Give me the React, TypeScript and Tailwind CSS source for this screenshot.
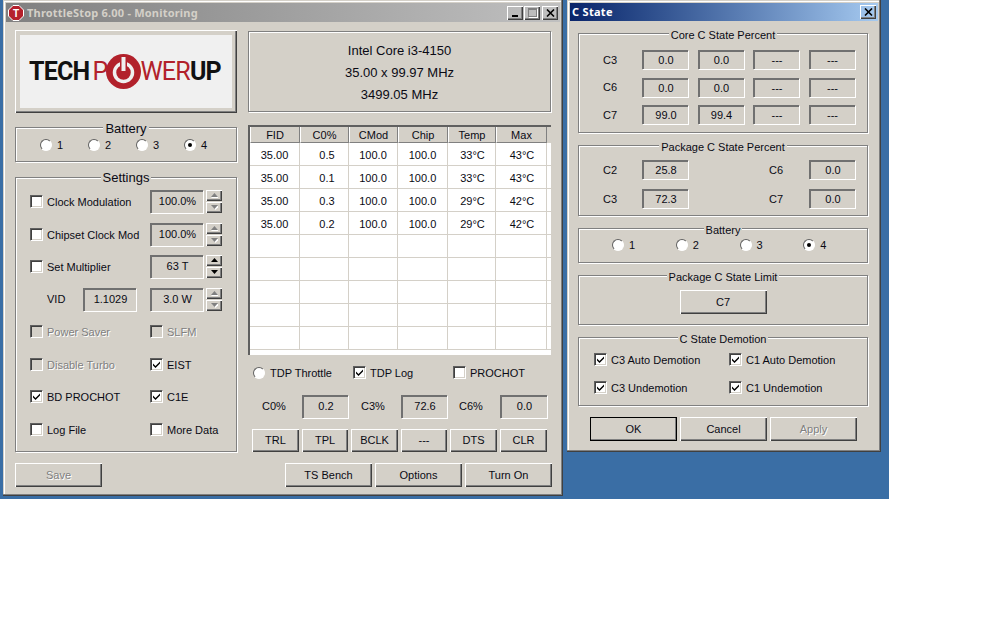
import type { ReactNode } from "react"

const raised =
  "shadow-[inset_1px_1px_0_#fff,inset_-1px_-1px_0_#404040,inset_-2px_-2px_0_#808080]"
const disabledText = "text-[#808080] [text-shadow:1px_1px_0_#fff]"

function Group({ title, className, titleClass = "top-[-6px] text-[11px]", children }: { title: string; className: string; titleClass?: string; children?: ReactNode }) {
  return (
    <div className={`relative border border-[#808080] shadow-[inset_1px_1px_0_#fff,1px_1px_0_#fff] ${className}`}>
      {title && (
        <div className={`absolute left-0 right-0 flex justify-center ${titleClass}`}>
          <span className="bg-[#d4d0c8] px-[2px] leading-[14px]">{title}</span>
        </div>
      )}
      {children}
    </div>
  )
}

function Field({ value, className = "" }: { value: string; className?: string }) {
  return (
    <div
      className={`flex items-center justify-center border-2 border-t-[#707070] border-l-[#707070] border-b-0 border-r-0 shadow-[1px_1px_0_#fff] ${className}`}
    >
      {value}
    </div>
  )
}

function Button({ label, className = "", disabled = false }: { label: string; className?: string; disabled?: boolean }) {
  return (
    <div className={`flex items-center justify-center ${raised} ${disabled ? disabledText : ""} ${className}`}>
      {label}
    </div>
  )
}

function Check({ label, checked = false, disabled = false }: { label: string; checked?: boolean; disabled?: boolean }) {
  return (
    <div className={`flex h-[13px] items-center ${disabled ? disabledText : ""}`}>
      <div
        className={`flex h-[13px] w-[13px] shrink-0 items-center justify-center border border-t-[#606060] border-l-[#606060] border-b-white border-r-white shadow-[inset_1px_1px_0_#404040,inset_-1px_-1px_0_#d4d0c8] ${
          disabled ? "bg-[#d4d0c8]" : "bg-white"
        }`}
      >
        {checked && (
          <svg width="9" height="9" viewBox="0 0 9 9">
            <path d="M1 3.5 L3.5 6 L8 1.5 V3.5 L3.5 8 L1 5.5 Z" fill="#000" />
          </svg>
        )}
      </div>
      <span className="ml-[4px] whitespace-nowrap pt-[2px]">{label}</span>
    </div>
  )
}

function Radio({ label, checked = false, className = "" }: { label: string; checked?: boolean; className?: string }) {
  return (
    <div className={`flex h-[14px] items-center ${className}`}>
      <div className="flex h-[12px] w-[12px] shrink-0 items-center justify-center rounded-full border border-t-[#606060] border-l-[#606060] border-b-white border-r-white bg-white">
        {checked && <div className="h-[4px] w-[4px] rounded-full bg-black" />}
      </div>
      <span className="ml-[5px] whitespace-nowrap">{label}</span>
    </div>
  )
}

function Spin({ up, enabled }: { up: boolean; enabled: boolean }) {
  return (
    <div className={`flex h-[11px] w-[16px] items-center justify-center ${raised}`}>
      <svg width="7" height="5" viewBox="0 0 7 5">
        {!enabled && <polygon points={up ? "4,1 8,5 0,5" : "1,1 8,1 4.5,5"} fill="#fff" />}
        <polygon points={up ? "3.5,0 7,4 0,4" : "0,0 7,0 3.5,4"} fill={enabled ? "#000" : "#808080"} />
      </svg>
    </div>
  )
}

function Spinner({ enabled = false }: { enabled?: boolean }) {
  return (
    <div className="ml-[3px] flex h-[23px] flex-col justify-between">
      <Spin up enabled={enabled} />
      <Spin up={false} enabled={enabled} />
    </div>
  )
}

function TitleButton({ children }: { children: ReactNode }) {
  return <div className={`flex h-[14px] w-[16px] items-center justify-center ${raised}`}>{children}</div>
}

const CloseIcon = (
  <svg width="9" height="8" viewBox="0 0 9 8">
    <path d="M1 0.5 L8 7.5 M8 0.5 L1 7.5" stroke="#000" strokeWidth="1.6" />
  </svg>
)

const rowCols = "grid grid-cols-[50px_49px_49px_50px_48px_51px]"
const headers = ["FID", "C0%", "CMod", "Chip", "Temp", "Max"]
const rows = [
  ["35.00", "0.5", "100.0", "100.0", "33°C", "43°C"],
  ["35.00", "0.1", "100.0", "100.0", "33°C", "43°C"],
  ["35.00", "0.3", "100.0", "100.0", "29°C", "42°C"],
  ["35.00", "0.2", "100.0", "100.0", "29°C", "42°C"],
  ["", "", "", "", "", ""],
  ["", "", "", "", "", ""],
  ["", "", "", "", "", ""],
  ["", "", "", "", "", ""],
  ["", "", "", "", "", ""],
]

const cellPad = ["", "pl-[6px]", "", "", "pl-[2px]", "pl-[2px]"]

function Logo() {
  return (
    <div className="flex h-[83px] items-center justify-center bg-[#d4d0c8] p-[5px] shadow-[inset_1px_1px_0_#fff,inset_-1px_-1px_0_#404040,inset_-2px_-2px_0_#808080]">
      <div className="flex h-full w-full items-center justify-center bg-[#f0f0f0] pr-[2px] font-['Roboto',sans-serif] text-[25px] font-bold leading-none tracking-[-0.8px]">
        <span className="text-[#111]">TECH</span>
        <span className="ml-[3px] font-normal text-[#b2212b]">P</span>
        <svg width="35" height="35" viewBox="0 0 35 35" className="mx-[-1px] shrink-0">
          <circle cx="17.5" cy="17.5" r="17.5" fill="#b2212b" />
          <circle cx="17.5" cy="18.5" r="9" fill="none" stroke="#f0f0f0" strokeWidth="3.5" />
          <rect x="14" y="2" width="7" height="15" fill="#b2212b" />
          <rect x="15.5" y="3" width="4" height="14" fill="#f0f0f0" />
        </svg>
        <span className="font-normal text-[#b2212b]">WER</span>
        <span className="text-[#111]">UP</span>
      </div>
    </div>
  )
}

function MainWindow() {
  return (
    <div className="absolute left-[3px] top-0 h-[496px] w-[560px] bg-[#d4d0c8] p-[3px] shadow-[inset_-1px_-1px_0_#404040,inset_-2px_-2px_0_#808080,inset_1px_1px_0_#d4d0c8,inset_2px_2px_0_#fff]">
      <div className="flex h-[19px] items-center bg-gradient-to-r from-[#808080] to-[#c0c0c0] pl-[2px] pr-[2px]">
        <svg width="16" height="16" viewBox="0 0 16 16" className="shrink-0">
          <polygon points="5,0.5 11,0.5 15.5,5 15.5,11 11,15.5 5,15.5 0.5,11 0.5,5" fill="#b5202b" stroke="#fff" />
          <text x="8" y="11.5" textAnchor="middle" fontSize="10" fontWeight="700" fill="#fff">
            T
          </text>
        </svg>
        <span className="ml-[3px] font-['Noto_Sans',sans-serif] text-[11px] font-bold tracking-[0.2px] text-[#d4d0c8]">
          ThrottleStop 6.00 - Monitoring
        </span>
        <div className="ml-auto flex items-center">
          <TitleButton>
            <div className="mt-[7px] h-[2px] w-[6px] bg-black" />
          </TitleButton>
          <div className="ml-[1px]">
            <TitleButton>
              <div className="h-[9px] w-[9px] border border-t-2 border-[#808080] shadow-[1px_1px_0_#fff]" />
            </TitleButton>
          </div>
          <div className="ml-[2px]">
            <TitleButton>{CloseIcon}</TitleButton>
          </div>
        </div>
      </div>

      <div className="flex gap-[11px] pl-[9px] pt-[8px]">
        <div className="flex w-[222px] flex-col">
          <Logo />
          <Group title="Battery" titleClass="top-[-6px] text-[13px]" className="mt-[14px] h-[35px]">
            <div className="flex pl-[24px] pt-[10px]">
              <Radio label="1" className="w-[48px]" />
              <Radio label="2" className="w-[48px]" />
              <Radio label="3" className="w-[48px]" />
              <Radio label="4" checked className="w-[48px]" />
            </div>
          </Group>
          <Group title="Settings" titleClass="top-[-7px] text-[13px]" className="mt-[15px] h-[275px] pl-[14px] pt-[12px]">
            <div className="flex h-[23px] items-center">
              <div className="w-[120px]"><Check label="Clock Modulation" /></div>
              <Field value="100.0%" className="h-[23px] w-[53px] pb-[3px]" />
              <Spinner />
            </div>
            <div className="mt-[10px] flex h-[23px] items-center">
              <div className="w-[120px]"><Check label="Chipset Clock Mod" /></div>
              <Field value="100.0%" className="h-[23px] w-[53px] pb-[3px]" />
              <Spinner />
            </div>
            <div className="mt-[9px] flex h-[23px] items-center">
              <div className="w-[120px]"><Check label="Set Multiplier" /></div>
              <Field value="63 T" className="h-[23px] w-[53px] pb-[3px]" />
              <Spinner enabled />
            </div>
            <div className="mt-[10px] flex h-[23px] items-center">
              <span className="ml-[17px] w-[36px]">VID</span>
              <Field value="1.1029" className="h-[23px] w-[53px] pb-[3px]" />
              <Field value="3.0 W" className="ml-[14px] h-[23px] w-[53px] pb-[3px]" />
              <Spinner />
            </div>
            <div className="mt-[14px] grid grid-cols-[120px_1fr] gap-y-[19.67px]">
              <Check label="Power Saver" disabled />
              <Check label="SLFM" disabled />
              <Check label="Disable Turbo" disabled />
              <Check label="EIST" checked />
              <Check label="BD PROCHOT" checked />
              <Check label="C1E" checked />
              <Check label="Log File" />
              <Check label="More Data" />
            </div>
          </Group>
          <Button label="Save" disabled className="mt-[11px] h-[24px] w-[87px]" />
        </div>

        <div className="flex w-[304px] flex-col">
          <Group title="" className="mt-[1px] flex h-[81px] w-[303px] flex-col items-center justify-center gap-[6px] pt-[2px] text-[13px] leading-[16px]">
            <span>Intel Core i3-4150</span>
            <span>35.00 x 99.97 MHz</span>
            <span>3499.05 MHz</span>
          </Group>

          <div className="mt-[13px] h-[230px] w-[303px] border-2 border-t-[#606060] border-l-[#606060] border-b-0 border-r-0 bg-white shadow-[1px_1px_0_#fff] outline outline-1 outline-[#d4d0c8]">
            <div className={`${rowCols} h-[16px] bg-[#d4d0c8]`}>
              {headers.map((h) => (
                <div key={h} className="flex items-center justify-center border-l border-l-white border-r border-r-[#808080] border-b border-b-[#808080] pt-[2px]">
                  {h}
                </div>
              ))}
            </div>
            {rows.map((row, i) => (
              <div key={i} className={`${rowCols} h-[23px] border-b border-b-[#d4d0c8]`}>
                {row.map((cell, j) => (
                  <div key={j} className={`flex items-center justify-center border-r border-r-[#d4d0c8] pt-[2px] ${cellPad[j]}`}>
                    {cell}
                  </div>
                ))}
              </div>
            ))}
          </div>

          <div className="mt-[11px] flex h-[14px] w-[303px]">
            <div className="ml-[5px] w-[100px]"><Radio label="TDP Throttle" /></div>
            <div className="w-[100px]"><Check label="TDP Log" checked /></div>
            <Check label="PROCHOT" />
          </div>

          <div className="mt-[15px] grid h-[23px] w-[299px] grid-cols-[54px_46px_53px_46px_53px_47px]">
            <span className="self-center pb-[1px] pl-[14px]">C0%</span>
            <Field value="0.2" className="pb-[3px]" />
            <span className="self-center pb-[1px] pl-[13px]">C3%</span>
            <Field value="72.6" className="pb-[3px]" />
            <span className="self-center pb-[1px] pl-[12px]">C6%</span>
            <Field value="0.0" className="pb-[3px]" />
          </div>

          <div className="ml-[4px] mt-[11px] flex h-[23px] gap-[3px]">
            <Button label="TRL" className="w-[47px]" />
            <Button label="TPL" className="w-[46px]" />
            <Button label="BCLK" className="w-[47px]" />
            <Button label="---" className="w-[46px]" />
            <Button label="DTS" className="w-[47px]" />
            <Button label="CLR" className="w-[47px]" />
          </div>

          <div className="mt-[11px] flex h-[24px] justify-end gap-[3px]">
            <Button label="TS Bench" className="w-[87px]" />
            <Button label="Options" className="w-[87px]" />
            <Button label="Turn On" className="w-[87px]" />
          </div>
        </div>
      </div>
    </div>
  )
}

const coreRows = [
  ["C3", "0.0", "0.0", "---", "---"],
  ["C6", "0.0", "0.0", "---", "---"],
  ["C7", "99.0", "99.4", "---", "---"],
]

function CStateWindow() {
  return (
    <div className="absolute left-[567px] top-0 h-[452px] w-[314px] bg-[#d4d0c8] p-[3px] shadow-[inset_-1px_-1px_0_#404040,inset_-2px_-2px_0_#808080,inset_1px_1px_0_#d4d0c8,inset_2px_2px_0_#fff]">
      <div className="flex h-[18px] items-center bg-gradient-to-r from-[#0a246a] to-[#a6caf0] pb-[1px] pl-[2px] pr-[2px]">
        <span className="font-['Noto_Sans',sans-serif] text-[11px] font-bold tracking-[0.3px] text-white">C State</span>
        <div className="ml-auto">
          <TitleButton>{CloseIcon}</TitleButton>
        </div>
      </div>

      <div className="ml-[8px] flex w-[290px] flex-col">
        <Group title="Core C State Percent" className="mt-[12px] h-[100px] pl-[24px] pt-[16px]">
          <div className="grid grid-cols-[29.5px_46px_46px_46px_46px] gap-x-[9.5px] gap-y-[8.5px]">
            {coreRows.map((row) =>
              row.map((v, i) =>
                i === 0 ? (
                  <span key={row[0]} className="self-center pt-[1px]">{v}</span>
                ) : (
                  <Field key={row[0] + i} value={v} className="h-[19px]" />
                ),
              ),
            )}
          </div>
        </Group>

        <Group title="Package C State Percent" className="mt-[12px] h-[71px] pl-[24px] pt-[14px]">
          <div className="flex h-[19px] items-center">
            <span className="w-[39px] pt-[1px]">C2</span>
            <Field value="25.8" className="h-[19px] w-[46px]" />
            <span className="ml-[81px] w-[40px] pt-[1px]">C6</span>
            <Field value="0.0" className="h-[19px] w-[46px]" />
          </div>
          <div className="mt-[10px] flex h-[19px] items-center">
            <span className="w-[39px] pt-[1px]">C3</span>
            <Field value="72.3" className="h-[19px] w-[46px]" />
            <span className="ml-[81px] w-[40px] pt-[1px]">C7</span>
            <Field value="0.0" className="h-[19px] w-[46px]" />
          </div>
        </Group>

        <Group title="Battery" className="mt-[12px] h-[35px]">
          <div className="flex pl-[33px] pt-[9px]">
            <Radio label="1" className="w-[66px]" />
            <Radio label="2" className="w-[66px]" />
            <Radio label="3" className="w-[66px]" />
            <Radio label="4" checked className="w-[66px]" />
          </div>
        </Group>

        <Group title="Package C State Limit" className="mt-[12px] flex h-[50px] justify-center pt-[14px]">
          <Button label="C7" className="h-[24px] w-[87px]" />
        </Group>

        <Group title="C State Demotion" className="mt-[12px] h-[69px] pl-[15px] pt-[15px]">
          <div className="grid grid-cols-[135px_1fr] gap-y-[15px]">
            <Check label="C3 Auto Demotion" checked />
            <Check label="C1 Auto Demotion" checked />
            <Check label="C3 Undemotion" checked />
            <Check label="C1 Undemotion" checked />
          </div>
        </Group>

        <div className="ml-[12px] mt-[11px] flex h-[24px] gap-[3px]">
          <Button label="OK" className="w-[87px] outline outline-1 outline-offset-[-1px] outline-black" />
          <Button label="Cancel" className="w-[87px]" />
          <Button label="Apply" disabled className="w-[87px]" />
        </div>
      </div>
    </div>
  )
}

export default function App() {
  return (
    <div className="h-[630px] w-[1008px] overflow-hidden bg-white font-['Liberation_Sans',sans-serif] text-[11px] leading-none text-[#0a0a14]">
      <div className="relative h-[499px] w-[889px] bg-[#3a6ea5]">
        <MainWindow />
        <CStateWindow />
      </div>
    </div>
  )
}
